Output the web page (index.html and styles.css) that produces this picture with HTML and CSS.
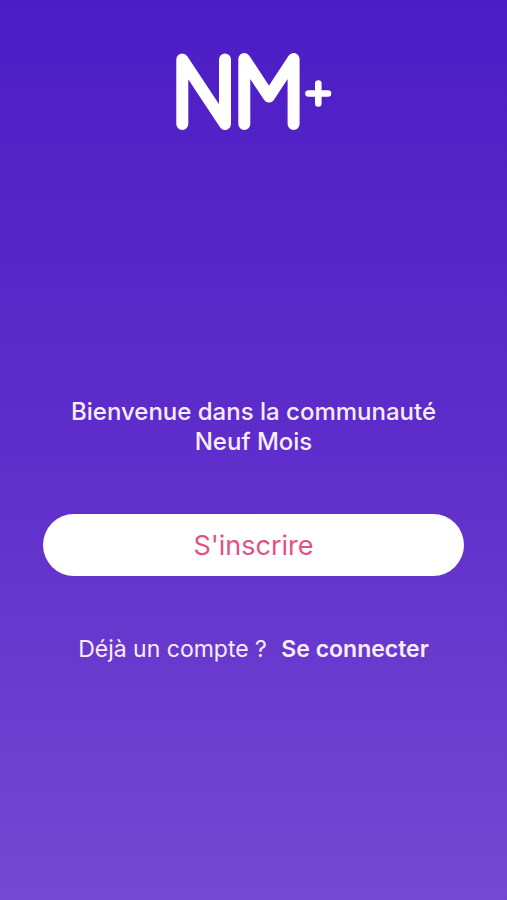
FILE: index.html
```html
<!DOCTYPE html>
<html lang="fr">
<head>
<meta charset="utf-8">
<meta name="viewport" content="width=device-width, initial-scale=1">
<title>Neuf Mois</title>
<link rel="stylesheet" href="styles.css">
</head>
<body>
<main class="welcome">
  <svg class="logo" viewBox="0 0 156 80" role="img" aria-label="NM+">
    <g fill="none" stroke="#fff" stroke-linecap="round" stroke-linejoin="round">
      <path stroke-width="12" d="M6.300 72V7.500L49 72V7.500M68.300 72V7L93 44.500L117.600 7V72"/>
      <path stroke-width="6.600" d="M132.500 41.500H152M142.300 31.500V51.500"/>
    </g>
  </svg>
  <h1 class="title">Bienvenue dans la communauté Neuf Mois</h1>
  <button class="signup" type="button">S'inscrire</button>
  <p class="login">Déjà un compte ? <a class="login-link" href="#connexion">Se connecter</a></p>
</main>
</body>
</html>
```
FILE: styles.css
```css
* {
  box-sizing: border-box;
}

body {
  margin: 0;
  color: #f8edff;
  font-family: Inter, "Liberation Sans", sans-serif;
}

.welcome {
  display: flex;
  flex-direction: column;
  align-items: center;
  min-height: 100vh;
  padding: 52px 43px;
  background: linear-gradient(#4c1dc5, #5e2dcb 50%, #7648d1);
}

.logo {
  width: 156px;
  height: 80px;
}

.title {
  max-width: 380px;
  margin: 265px 0 57px;
  font-size: 24px;
  font-weight: 500;
  line-height: 30px;
  text-align: center;
}

.signup {
  width: 100%;
  height: 62px;
  border: 0;
  border-radius: 31px;
  background: #fff;
  color: #df5286;
  font: 400 27px Inter, "Liberation Sans", sans-serif;
}

.login {
  margin: 58px 0 0;
  font-size: 23px;
  line-height: 30px;
  white-space: nowrap;
}

.login-link {
  margin-left: 8px;
  color: inherit;
  font-weight: 600;
  text-decoration: none;
}
```
